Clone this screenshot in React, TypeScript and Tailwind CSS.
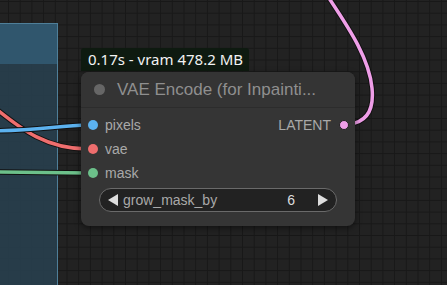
import React from "react";

function Wires() {
  return (
    <svg className="absolute inset-0" width={447} height={285} viewBox="0 0 447 285">
      <g fill="none" strokeLinecap="round">
        {/* pink */}
        <path d="M349 124 C 368 122, 374 108, 372 88 C 369 55, 343 20, 327 -5" stroke="#111" strokeWidth={5.5} />
        <path d="M349 124 C 368 122, 374 108, 372 88 C 369 55, 343 20, 327 -5" stroke="#ef9ee8" strokeWidth={3.5} />
        {/* red */}
        <path d="M-5 108 C 20 128, 45 149, 88 149" stroke="#111" strokeWidth={5.5} />
        <path d="M-5 108 C 20 128, 45 149, 88 149" stroke="#ef6e6e" strokeWidth={3.5} />
        {/* blue */}
        <path d="M-5 131 C 35 130, 60 126, 88 125" stroke="#111" strokeWidth={5.5} />
        <path d="M-5 131 C 35 130, 60 126, 88 125" stroke="#5cb2ef" strokeWidth={3.5} />
        {/* green */}
        <path d="M-5 172 L 88 173" stroke="#111" strokeWidth={5.5} />
        <path d="M-5 172 L 88 173" stroke="#6cc08a" strokeWidth={3.5} />
      </g>
    </svg>
  );
}

function Grid() {
  return (
    <svg className="absolute inset-0" width={447} height={285}>
      <defs>
        <pattern id="g" width={11.7} height={11.7} patternUnits="userSpaceOnUse" x={8} y={1}>
          <path d="M0 0.5 H11.7 M0.5 0 V11.7" stroke="#181818" strokeWidth={1} fill="none" />
        </pattern>
      </defs>
      <rect width={447} height={285} fill="#222222" />
      <rect width={447} height={285} fill="url(#g)" />
    </svg>
  );
}

export default function App() {
  return (
    <div className="relative w-[447px] h-[285px] overflow-hidden bg-[#222222]" style={{ fontFamily: '"Liberation Sans", Arial, sans-serif' }}>
      <Grid />
      {/* group box */}
      <div className="absolute left-[-2px] top-[23px] w-[60px] h-[270px] border border-[#4f7f99] bg-[#283f4e]/90 flex flex-col">
        <div className="h-[40px] bg-[#30566d]" />
      </div>
      <Wires />
      {/* status badge */}
      <div className="absolute left-[81px] top-[48px] h-[23px] w-[168px] rounded-t-[3px] bg-[#0e1a10] text-[#f2f2f2] text-[15px] pl-[7px] leading-[23px]" style={{ fontFamily: '"Noto Sans", sans-serif' }}>
        0.17s - vram 478.2 MB
      </div>
      {/* node */}
      <div className="absolute left-[81px] top-[72px] w-[274px] h-[154px] rounded-[8px] bg-[#353535] shadow-[0_2px_6px_rgba(0,0,0,0.5)] flex flex-col">
        <div className="h-[36px] flex items-center border-b border-[#2c2c2c] bg-[#343434] rounded-t-[8px]">
          <div className="w-[11px] h-[11px] rounded-full bg-[#666666] ml-[13px]" />
          <div className="ml-[12px] text-[17px] text-[#8f8f8f] whitespace-nowrap">VAE Encode (for Inpainti...</div>
        </div>
        <div className="flex flex-col pt-[5px]">
          <div className="h-[24px] flex items-center justify-between">
            <div className="flex items-center">
              <div className="ml-[7px] w-[10px] h-[10px] rounded-full bg-[#5cb2ef]" />
              <span className="ml-[7px] text-[14px] text-[#a9a9a9]">pixels</span>
            </div>
            <div className="flex items-center">
              <span className="text-[14px] text-[#a9a9a9]">LATENT</span>
              <div className="ml-[8px] mr-[6px] w-[10px] h-[10px] rounded-full bg-[#ef9ee8] border border-[#222]" />
            </div>
          </div>
          <div className="h-[24px] flex items-center">
            <div className="ml-[7px] w-[10px] h-[10px] rounded-full bg-[#ef6e6e]" />
            <span className="ml-[7px] text-[14px] text-[#a9a9a9]">vae</span>
          </div>
          <div className="h-[24px] flex items-center">
            <div className="ml-[7px] w-[10px] h-[10px] rounded-full bg-[#6cc08a]" />
            <span className="ml-[7px] text-[14px] text-[#a9a9a9]">mask</span>
          </div>
          <div className="mt-[3px] ml-[18px] w-[238px] h-[24px] rounded-full border border-[#6a6a6a] bg-[#222222] flex items-center text-[14px]">
            <svg width={12} height={14} viewBox="0 0 12 14" className="ml-[7px]"><path d="M11 1 L1 7 L11 13 Z" fill="#dddddd" /></svg>
            <span className="ml-[4px] text-[#a9a9a9]">grow_mask_by</span>
            <span className="ml-auto text-[#dddddd]">6</span>
            <svg width={12} height={14} viewBox="0 0 12 14" className="ml-[22px] mr-[7px]"><path d="M1 1 L11 7 L1 13 Z" fill="#dddddd" /></svg>
          </div>
        </div>
      </div>
    </div>
  );
}
